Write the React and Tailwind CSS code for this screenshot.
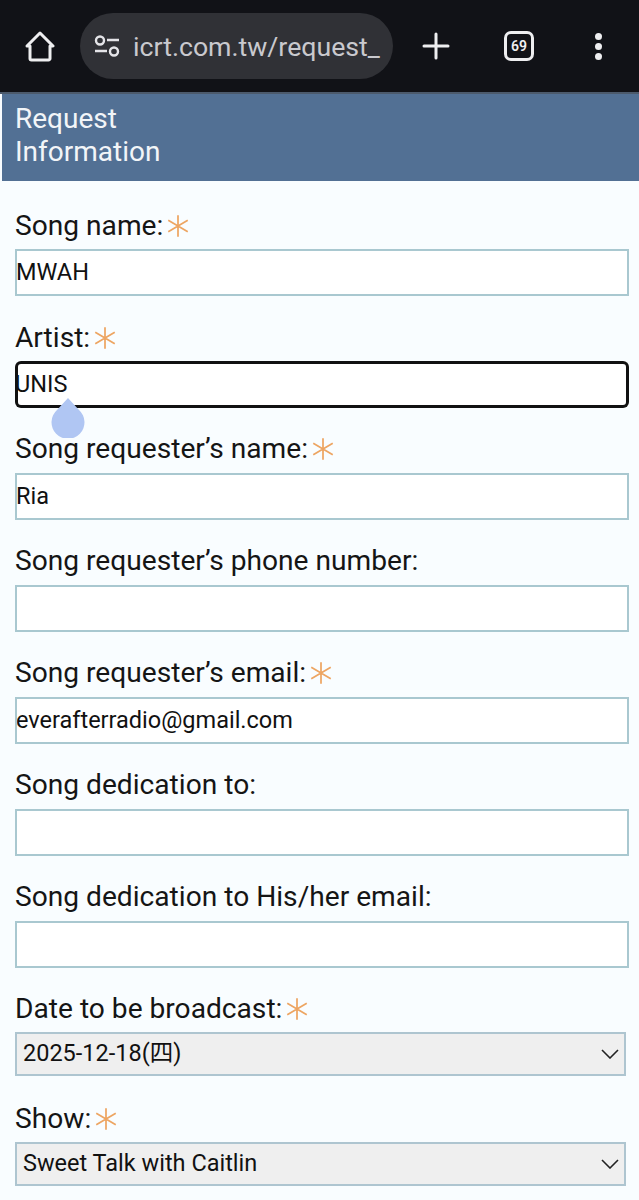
import React from "react";

function Star() {
  return (
    <svg width="26" height="26" viewBox="0 0 24 24" className="ml-[2px] shrink-0" stroke="#eda562" strokeWidth="1.6" fill="none">
      <path d="M12 2v20M3 6.8l18 10.4M21 6.8L3 17.2" />
    </svg>
  );
}

function Label({ label, required, up }) {
  return (
    <div className={up ? "h-[38px] flex items-center text-[28.15px] leading-[38px] text-[#151515] whitespace-nowrap" : "h-[40px] flex items-center text-[28.15px] leading-[40px] text-[#151515] whitespace-nowrap"}>
      <span>{label}</span>
      {required && <Star />}
    </div>
  );
}

function Field({ label, required, value, focused, up }) {
  return (
    <div className="h-[112px] flex flex-col">
      <Label label={label} required={required} up={up} />
      <div className={up ? "h-[47px] mt-[5px]" : "h-[47px] mt-[3px]"}>
        <input
          readOnly
          value={value || ""}
          className={
            focused
              ? "w-[614px] h-[47px] bg-white shadow-[inset_0_0_0_3px_#111] rounded-[6px] pl-[1px] pb-[1px] indent-[-1px] text-[23.5px] text-[#111] outline-none"
              : "w-[614px] h-[47px] bg-white border-2 border-[#a9c8d0] pl-0 pb-[2px] indent-[-1px] text-[23.5px] text-[#111] outline-none"
          }
        />
      </div>
    </div>
  );
}

function SelectBox({ value }) {
  return (
    <div className="w-[611px] h-[44px] flex items-center justify-between bg-[#efefef] border-2 border-[#aec5d0] pl-[6px] pr-[5px] text-[23.5px] text-[#111]">
      <span>{value}</span>
      <svg width="18" height="10" viewBox="0 0 18 10" fill="none" stroke="#222" strokeWidth="1.6">
        <path d="M1 1l8 8 8-8" />
      </svg>
    </div>
  );
}

export default function App() {
  return (
    <div className="w-[639px] h-[1200px] overflow-hidden bg-[#f9fdff] font-['Roboto','Noto_Sans_CJK_TC',sans-serif]">
      <div className="h-[94px] bg-[#111217] border-b-2 border-[#4c5a6c] flex items-center">
        <svg className="ml-[25px] mb-[1px]" width="30" height="32" viewBox="0 0 30 32" fill="none" stroke="#eeeef0" strokeWidth="3" strokeLinejoin="round">
          <path d="M2 16L15 3l13 13h-3v12.5a1.5 1.5 0 0 1-1.5 1.5h-17A1.5 1.5 0 0 1 5 28.5V16z" />
        </svg>
        <div className="ml-[25px] w-[313px] h-[66px] rounded-full bg-[#303136] flex items-center pl-[14px] overflow-hidden">
          <svg width="26" height="22" viewBox="0 0 26 22" fill="none" stroke="#e4e4e8" strokeWidth="2.4" className="shrink-0">
            <circle cx="6" cy="5.5" r="4" />
            <path d="M13 5h12M1 16h12" />
            <circle cx="20" cy="16.5" r="4" />
          </svg>
          <span className="ml-[13px] text-[26.7px] leading-[36px] mt-[1px] text-[#c9c9ce] whitespace-nowrap">icrt.com.tw/request_</span>
        </div>
        <svg className="ml-[28px]" width="30" height="30" viewBox="0 0 30 30" stroke="#eeeef0" strokeWidth="3" strokeLinecap="round">
          <path d="M15 3v24M3 15h24" />
        </svg>
        <div className="ml-[53px] w-[30px] h-[30px] rounded-[7px] border-[3px] border-[#eeeef0] flex items-center justify-center text-[14px] font-semibold text-[#eeeef0]">
          69
        </div>
        <div className="ml-[61px] flex flex-col gap-[3px]">
          <div className="w-[7px] h-[7px] rounded-full bg-[#eeeef0]" />
          <div className="w-[7px] h-[7px] rounded-full bg-[#eeeef0]" />
          <div className="w-[7px] h-[7px] rounded-full bg-[#eeeef0]" />
        </div>
      </div>

      <div className="ml-[2px] h-[87px] bg-[#527094] pl-[13px] pt-[8px] text-[28px] leading-[33px] text-[#f2f5f8]">
        Request
        <br />
        Information
      </div>

      <div className="relative pl-[15px] pt-[25px]">
        <Field label="Song name:" required value="MWAH" />
        <Field label="Artist:" required value="UNIS" focused />
        <Field label="Song requester’s name:" required value="Ria" up />
        <Field label="Song requester’s phone number:" up />
        <Field label="Song requester’s email:" required value="everafterradio@gmail.com" up />
        <Field label="Song dedication to:" up />
        <Field label="Song dedication to His/her email:" up />
        <div className="h-[109px] flex flex-col">
          <Label label="Date to be broadcast:" required up />
          <div className="mt-[4px]">
            <SelectBox value="2025-12-18(四)" />
          </div>
        </div>
        <div className="flex flex-col">
          <Label label="Show:" required />
          <div className="mt-[3px]">
            <SelectBox value="Sweet Talk with Caitlin" />
          </div>
        </div>

        <svg className="absolute left-[51px] top-[217px]" width="34" height="40" viewBox="0 0 34 40" fill="#b0c6f3">
          <path d="M17 0L28 12A16.5 16.5 0 1 1 6 12z" />
        </svg>
      </div>
    </div>
  );
}
